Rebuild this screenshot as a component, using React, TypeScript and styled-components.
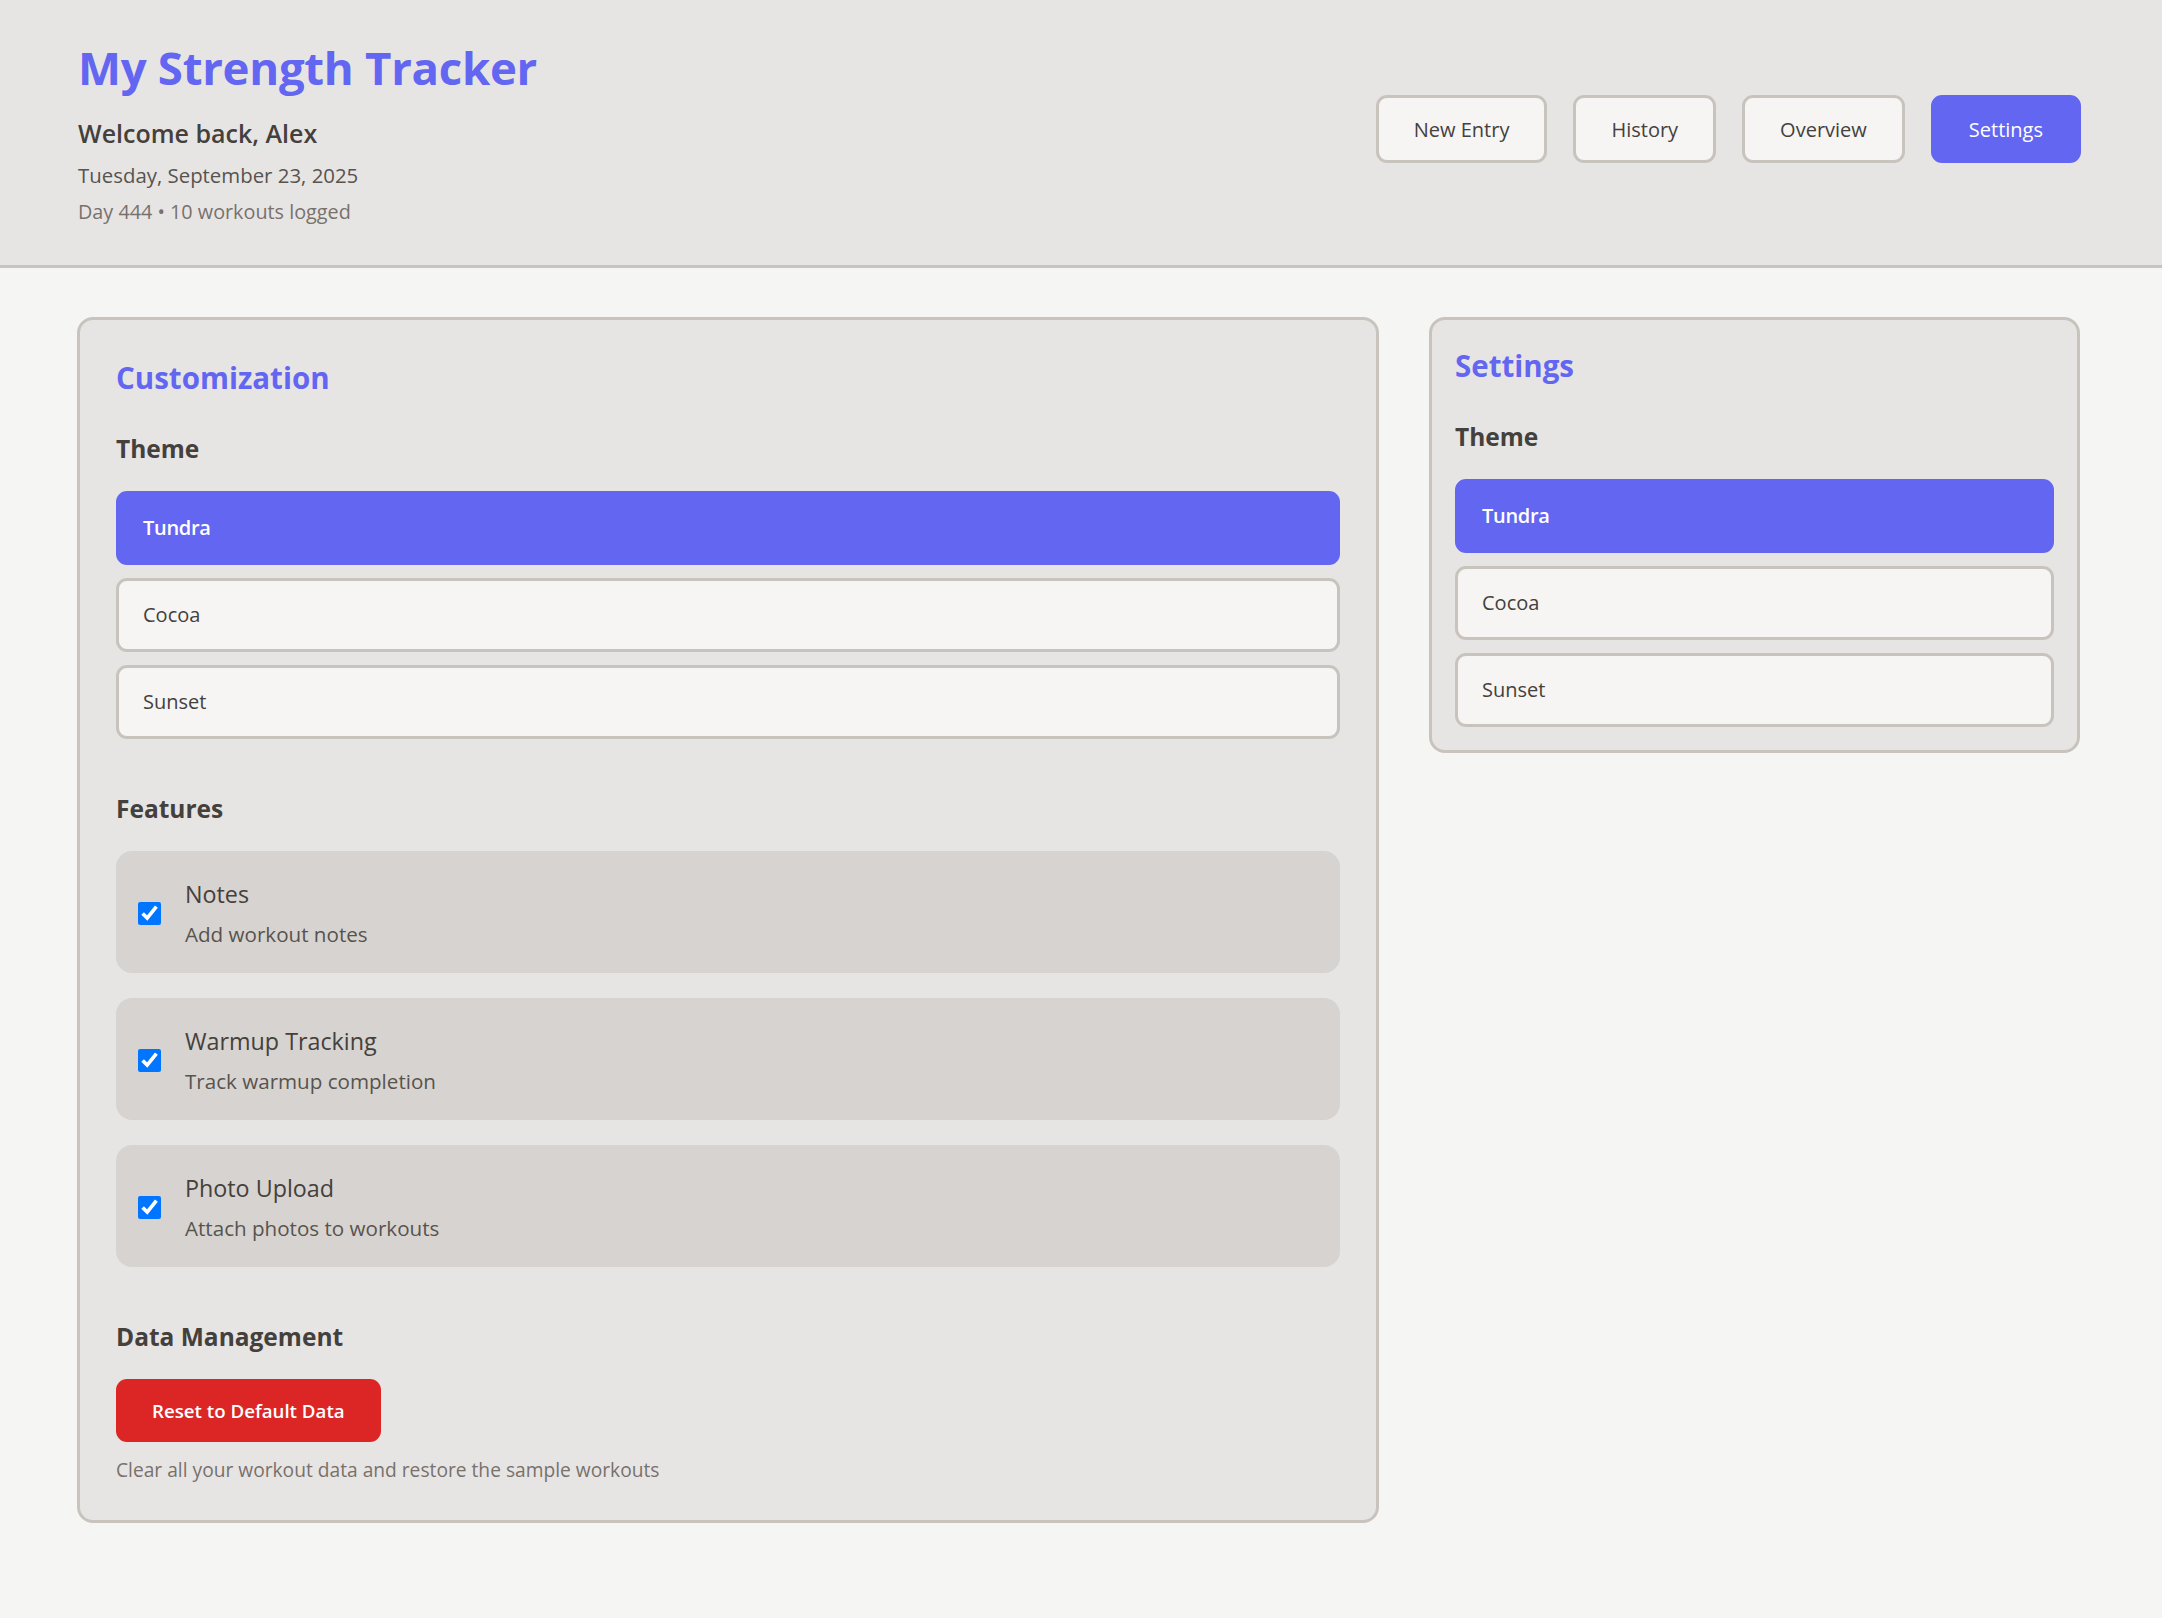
import styled, { createGlobalStyle } from "styled-components";

const colors = {
  accent: "#6366f1",
  danger: "#dc2626",
  page: "#f5f5f4",
  surface: "#e7e5e4",
  card: "#d7d3d0",
  border: "#c9c3be",
  field: "#f6f5f3",
  text: "#44403c",
  textSoft: "#57534e",
  textMuted: "#78716c",
};

const GlobalStyle = createGlobalStyle`
  html, body {
    margin: 0;
    padding: 0;
    background: ${colors.page};
  }
  body {
    font-family: "Open Sans", "Noto Sans", sans-serif;
    color: ${colors.text};
  }
  * {
    box-sizing: border-box;
  }
`;

const themes = ["Tundra", "Cocoa", "Sunset"];

const features = [
  { name: "Notes", description: "Add workout notes" },
  { name: "Warmup Tracking", description: "Track warmup completion" },
  { name: "Photo Upload", description: "Attach photos to workouts" },
];

const navItems = ["New Entry", "History", "Overview", "Settings"];

function ThemeList() {
  return (
    <OptionList>
      {themes.map((theme) => (
        <ThemeOption key={theme} $active={theme === "Tundra"}>
          {theme}
        </ThemeOption>
      ))}
    </OptionList>
  );
}

export default function App() {
  return (
    <>
      <GlobalStyle />
      <Header>
        <Intro>
          <AppTitle>My Strength Tracker</AppTitle>
          <Welcome>Welcome back, Alex</Welcome>
          <DateLine>Tuesday, September 23, 2025</DateLine>
          <StatsLine>Day 444 • 10 workouts logged</StatsLine>
        </Intro>
        <Nav>
          {navItems.map((item) => (
            <NavButton key={item} $active={item === "Settings"}>
              {item}
            </NavButton>
          ))}
        </Nav>
      </Header>

      <Main>
        <Panel $padding="36px">
          <PanelTitle>Customization</PanelTitle>

          <Section>
            <SectionTitle>Theme</SectionTitle>
            <ThemeList />
          </Section>

          <Section>
            <SectionTitle>Features</SectionTitle>
            <FeatureList>
              {features.map((feature) => (
                <FeatureCard key={feature.name}>
                  <Checkbox type="checkbox" defaultChecked />
                  <FeatureText>
                    <FeatureName>{feature.name}</FeatureName>
                    <FeatureDescription>{feature.description}</FeatureDescription>
                  </FeatureText>
                </FeatureCard>
              ))}
            </FeatureList>
          </Section>

          <Section>
            <SectionTitle>Data Management</SectionTitle>
            <DangerButton>Reset to Default Data</DangerButton>
            <HelpText>Clear all your workout data and restore the sample workouts</HelpText>
          </Section>
        </Panel>

        <Panel $padding="24px 23px 23px">
          <PanelTitle>Settings</PanelTitle>
          <Section>
            <SectionTitle>Theme</SectionTitle>
            <ThemeList />
          </Section>
        </Panel>
      </Main>
    </>
  );
}

const Header = styled.header`
  height: 268px;
  display: flex;
  align-items: center;
  justify-content: space-between;
  padding: 0 81px 0 78px;
  background: ${colors.surface};
  border-bottom: 3px solid ${colors.border};
`;

const Intro = styled.div`
  display: flex;
  flex-direction: column;
`;

const AppTitle = styled.h1`
  margin: 0;
  font-size: 45.6px;
  font-weight: 700;
  line-height: 48px;
  letter-spacing: -0.3px;
  color: ${colors.accent};
`;

const Welcome = styled.p`
  margin: 30px 0 0;
  font-size: 25px;
  font-weight: 600;
  line-height: 24px;
  color: ${colors.text};
`;

const DateLine = styled.p`
  margin: 19px 0 0;
  font-size: 20.4px;
  line-height: 22px;
  color: ${colors.textSoft};
`;

const StatsLine = styled.p`
  margin: 16px 0 0;
  font-size: 19.8px;
  line-height: 20px;
  color: ${colors.textMuted};
`;

const Nav = styled.nav`
  display: flex;
  gap: 26px;
  margin-bottom: 7px;
`;

const NavButton = styled.button<{ $active?: boolean }>`
  height: 68px;
  padding: 0 35px;
  border: 3px solid ${({ $active }) => ($active ? colors.accent : colors.border)};
  border-radius: 11px;
  background: ${({ $active }) => ($active ? colors.accent : colors.field)};
  color: ${({ $active }) => ($active ? "#ffffff" : colors.text)};
  font-family: inherit;
  font-size: 20px;
  font-weight: 500;
  cursor: pointer;
`;

const Main = styled.main`
  display: grid;
  grid-template-columns: 2fr 1fr;
  gap: 50px;
  align-items: start;
  padding: 49px 82px 80px 77px;
`;

const Panel = styled.section<{ $padding: string }>`
  padding: ${({ $padding }) => $padding};
  background: ${colors.surface};
  border: 3px solid ${colors.border};
  border-radius: 16px;
`;

const PanelTitle = styled.h2`
  margin: 0;
  font-size: 29.5px;
  font-weight: 700;
  line-height: 44.8px;
  color: ${colors.accent};
`;

const Section = styled.div`
  margin-top: 52px;

  ${PanelTitle} + & {
    margin-top: 30px;
  }
`;

const SectionTitle = styled.h3`
  margin: 0 0 25px;
  font-size: 24.5px;
  font-weight: 700;
  line-height: 35px;
  color: ${colors.text};
`;

const OptionList = styled.div`
  display: flex;
  flex-direction: column;
  gap: 13px;
`;

const ThemeOption = styled.button<{ $active?: boolean }>`
  height: 74px;
  padding: 0 24px;
  text-align: left;
  border: 3px solid ${({ $active }) => ($active ? colors.accent : colors.border)};
  border-radius: 11px;
  background: ${({ $active }) => ($active ? colors.accent : colors.field)};
  color: ${({ $active }) => ($active ? "#ffffff" : colors.text)};
  font-family: inherit;
  font-size: 20px;
  font-weight: ${({ $active }) => ($active ? 600 : 500)};
  letter-spacing: ${({ $active }) => ($active ? "-0.3px" : "0")};
  cursor: pointer;
`;

const FeatureList = styled.div`
  display: flex;
  flex-direction: column;
  gap: 25px;
`;

const FeatureCard = styled.label`
  display: flex;
  align-items: center;
  gap: 24px;
  padding: 25px 22px 22px;
  border-radius: 16px;
  background: ${colors.card};
  cursor: pointer;
`;

const Checkbox = styled.input`
  width: 23px;
  height: 23px;
  margin: 0;
  flex-shrink: 0;
  accent-color: #0075ff;
`;

const FeatureText = styled.div`
  display: flex;
  flex-direction: column;
  gap: 6px;
`;

const FeatureName = styled.span`
  font-size: 23.3px;
  font-weight: 500;
  line-height: 36px;
  color: ${colors.text};
`;

const FeatureDescription = styled.span`
  font-size: 20.6px;
  line-height: 33px;
  color: ${colors.textSoft};
`;

const DangerButton = styled.button`
  display: block;
  height: 63px;
  padding: 0 36px;
  border: none;
  border-radius: 11px;
  background: ${colors.danger};
  color: #ffffff;
  font-family: inherit;
  font-size: 18.7px;
  font-weight: 600;
  cursor: pointer;
`;

const HelpText = styled.p`
  margin: 13px 0 0;
  font-size: 19.2px;
  line-height: 29px;
  color: ${colors.textMuted};
`;
